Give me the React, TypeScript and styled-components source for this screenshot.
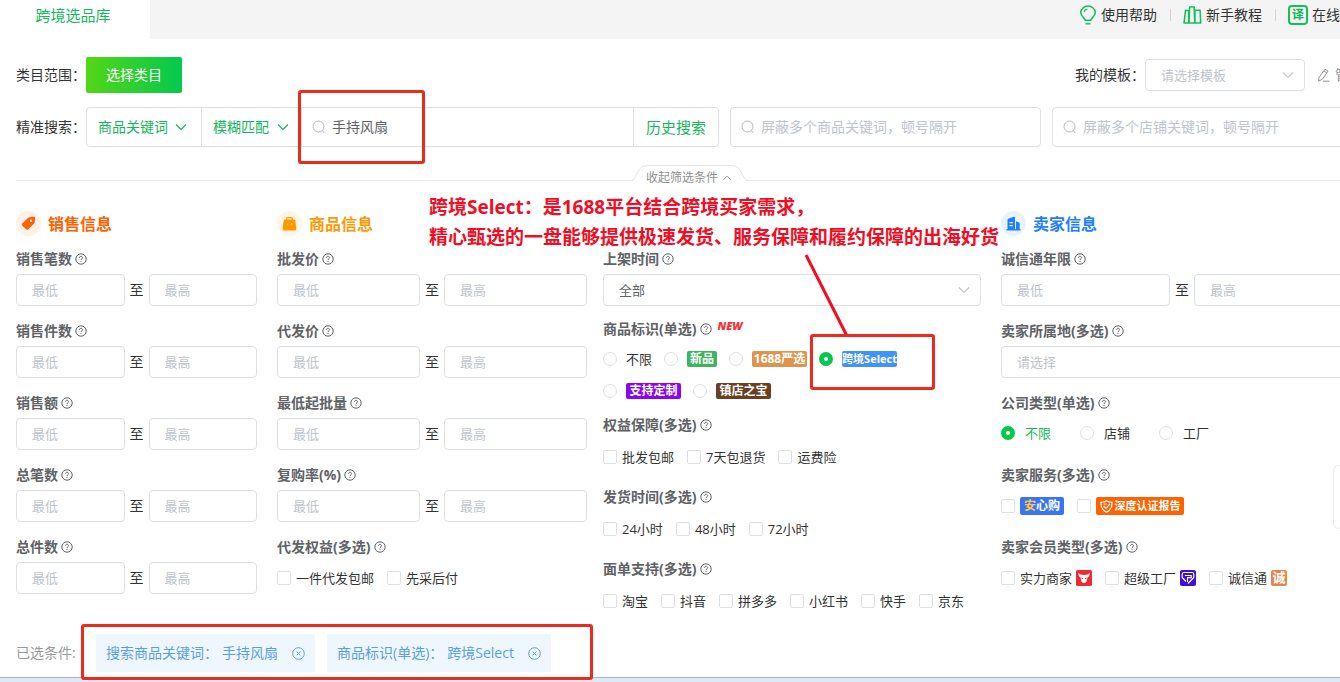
import React, { useId } from "react";
import styled, { createGlobalStyle } from "styled-components";

const GlobalStyle = createGlobalStyle`
  * { box-sizing: border-box; }
  body {
    margin: 0;
    overflow-x: hidden;
    background: #fff;
    color: #333;
    font: 14px/20px "Open Sans", "Noto Sans CJK SC", sans-serif;
  }
  button, input, select { font: inherit; color: inherit; margin: 0; }
  input::placeholder { color: #c0c4cc; opacity: 1; }
`;

const green = "#12b85a";
const line = "#dcdfe6";
const faint = "#c0c4cc";

const Viewport = styled.div`
  overflow: hidden;
`;

const Page = styled.div`
  width: calc(100% + 39px);
`;

const TopBar = styled.header`
  display: flex;
  justify-content: space-between;
  height: 39px;
  padding-right: 11px;
  background: #f4f4f4;
`;

const Tab = styled.a`
  width: 150px;
  padding: 5px 4px 0 0;
  background: #fff;
  color: ${green};
  font-size: 15px;
  text-align: center;
  text-decoration: none;
`;

const HelpNav = styled.nav`
  display: flex;
  align-items: center;
  height: 30px;
`;

const HelpLink = styled.a`
  display: flex;
  align-items: center;
  gap: 4px;
  color: #333;
  text-decoration: none;
  & + & {
    margin-left: 13px;
  }
  & + &::before {
    content: "";
    width: 1px;
    height: 12px;
    margin-right: 8px;
    background: #d4d4d4;
  }
`;

const TranslateMark = styled.span`
  width: 20px;
  height: 20px;
  border: 2px solid #14c05c;
  border-radius: 4px;
  color: #14b457;
  font-size: 12px;
  font-weight: 700;
  line-height: 16px;
  text-align: center;
`;

const Main = styled.main`
  padding: 18px 16px 0;
`;

const Bar = styled.div`
  display: flex;
  align-items: center;
  justify-content: space-between;
  height: 36px;
  margin-bottom: 14px;
`;

const Inline = styled.div`
  display: flex;
  align-items: center;
`;

const BarLabel = styled.label`
  flex: none;
  width: 70px;
`;

const CategoryButton = styled.button`
  width: 96px;
  height: 36px;
  padding: 0;
  border: 0;
  border-radius: 2px;
  background: linear-gradient(90deg, #52d716, #04c94e);
  color: #fff;
`;

const SelectBox = styled.span<{ $width?: string; $arrow?: number }>`
  position: relative;
  display: flex;
  width: ${(p) => p.$width ?? "100%"};
  svg {
    position: absolute;
    right: ${(p) => p.$arrow ?? 11}px;
    top: calc(50% - 4px);
    pointer-events: none;
  }
`;

const Select = styled.select<{ $muted?: boolean }>`
  appearance: none;
  width: 100%;
  height: 32px;
  padding: 0 15px;
  border: 1px solid ${line};
  border-radius: 4px;
  background: #fff;
  color: ${(p) => (p.$muted ? faint : "#606266")};
  font-size: 13px;
`;

const ManageButton = styled.button`
  display: flex;
  align-items: center;
  gap: 5px;
  padding: 0;
  margin-left: 12px;
  border: 0;
  background: none;
  color: #909399;
`;

const SearchRow = styled.div`
  display: flex;
  align-items: center;
`;

const SearchGrid = styled.div`
  flex: 1;
  display: grid;
  grid-template-columns: 633fr 311fr 311fr;
  gap: 11px;
`;

const SearchBox = styled.div`
  position: relative;
  display: flex;
  align-items: center;
  height: 40px;
  border: 1px solid ${line};
  border-radius: 4px;
`;

const SearchSelect = styled.select`
  appearance: none;
  width: 100%;
  height: 38px;
  padding: 0 11px;
  border: 0;
  border-right: 1px solid ${line};
  background: transparent;
  color: ${green};
`;

const KeywordField = styled.label`
  flex: 1;
  position: relative;
  display: flex;
  align-items: center;
  gap: 6px;
  min-width: 0;
  height: 38px;
  padding-left: 10px;
  svg {
    flex: none;
  }
`;

const KeywordInput = styled.input`
  flex: 1;
  min-width: 0;
  padding: 0;
  border: 0;
  outline: 0;
  background: transparent;
  color: #606266;
`;

const HistoryButton = styled.button`
  flex: none;
  width: 85px;
  height: 38px;
  padding: 0;
  border: 0;
  border-left: 1px solid ${line};
  background: transparent;
  color: ${green};
  font-size: 15px;
`;

const Divider = styled.div`
  display: flex;
  height: 26px;
  margin: 18px 0 20px;
  &::before,
  &::after {
    content: "";
    flex: 1;
    height: 1px;
    margin-top: 15px;
    background: #ebebeb;
  }
`;

const FoldButton = styled.button`
  position: relative;
  display: flex;
  align-items: center;
  gap: 4px;
  width: 117px;
  height: 26px;
  padding: 0 15px;
  border: 0;
  background: none;
  color: #909090;
  font-size: 12px;
`;

const FoldOutline = styled.svg`
  position: absolute;
  left: 0;
  top: 0;
`;

const Columns = styled.div`
  display: grid;
  grid-template-columns: 241fr 306fr 378fr 362fr;
  column-gap: 20px;
`;

const Column = styled.section<{ $wide?: boolean }>`
  position: relative;
  min-width: 0;
  margin-right: ${(p) => (p.$wide ? "-4px" : "0")};
`;

const ColumnTitle = styled.h2<{ $color?: string }>`
  display: flex;
  align-items: center;
  gap: 7px;
  height: 25px;
  margin: 0 0 8px;
  color: ${(p) => p.$color};
  font-size: 16px;
  font-weight: 700;
`;

const Disc = styled.span<{ $tint: string }>`
  display: grid;
  place-items: center;
  width: 25px;
  height: 25px;
  border-radius: 50%;
  background: ${(p) => p.$tint};
`;

const Group = styled.div<{ $after?: number }>`
  margin-bottom: ${(p) => p.$after ?? 10}px;
`;

const GroupLabel = styled.div`
  display: flex;
  align-items: center;
  gap: 3px;
  height: 30px;
  color: #606266;
  font-weight: 700;
`;

const NewMark = styled.em`
  margin: 0 0 6px 3px;
  color: #f5323c;
  font-size: 11px;
  font-weight: 800;
  line-height: 12px;
`;

const RangeRow = styled.div`
  display: flex;
  align-items: center;
  gap: 5px;
`;

const TextInput = styled.input`
  flex: 1;
  width: 100%;
  min-width: 0;
  height: 32px;
  padding: 0 15px;
  border: 1px solid ${line};
  border-radius: 4px;
  font-size: 13px;
`;

const Options = styled.div<{ $row: number; $gap: number }>`
  display: flex;
  flex-wrap: wrap;
  gap: 2px ${(p) => p.$gap}px;
  label {
    height: ${(p) => p.$row}px;
  }
`;

const OptionLabel = styled.label<{ $space: number }>`
  position: relative;
  display: flex;
  align-items: center;
  gap: ${(p) => p.$space}px;
  font-size: 13px;
  white-space: nowrap;
`;

const CheckInput = styled.input`
  appearance: none;
  flex: none;
  width: 14px;
  height: 14px;
  border: 1px solid ${line};
  border-radius: 2px;
  &:checked {
    background: #06c755;
  }
`;

const RadioInput = styled.input`
  appearance: none;
  flex: none;
  width: 14px;
  height: 14px;
  border: 1px solid ${line};
  border-radius: 50%;
  background: #fff;
  &:checked {
    border: 5px solid #06c74f;
  }
  &:checked + span {
    color: ${green};
  }
`;

const Badge = styled.b<{ $bg: string; $width: number; $tall?: boolean; $small?: boolean }>`
  display: flex;
  align-items: center;
  justify-content: center;
  gap: 2px;
  width: ${(p) => p.$width}px;
  height: ${(p) => (p.$tall ? 18 : 16)}px;
  border-radius: 2px;
  background: ${(p) => p.$bg};
  color: #fff;
  font-size: ${(p) => (p.$small ? 11 : 12)}px;
  line-height: 16px;
`;

const Gold = styled.span`
  color: #ffc53d;
`;

const Member = styled.span`
  display: flex;
  align-items: center;
  gap: 4px;
`;

const HonestMark = styled.b`
  width: 16px;
  height: 16px;
  border-radius: 2px;
  background: #e8834a;
  color: #fff;
  font-size: 13px;
  line-height: 15px;
  text-align: center;
`;

const Chosen = styled.div`
  position: relative;
  display: flex;
  align-items: center;
  gap: 12px;
  padding: 8px 0 5px;
  color: #999;
`;

const ChosenLabel = styled.span`
  width: 68px;
`;

const Chip = styled.span`
  display: flex;
  align-items: center;
  gap: 4px;
  height: 38px;
  padding: 0 10px;
  background: #eef6fe;
  color: #5b9fe3;
`;

const ChipClose = styled.button`
  display: flex;
  padding: 0;
  margin-left: 10px;
  border: 0;
  background: none;
  color: inherit;
`;

const BottomStrip = styled.div`
  height: 5px;
  border-top: 1px solid #a9b4c2;
  background: #dfe9f6;
`;

const SideHandle = styled.aside`
  position: fixed;
  right: 0;
  top: 465px;
  width: 7px;
  height: 64px;
  border: 1px solid #eee;
  border-right: 0;
  border-radius: 6px 0 0 6px;
  background: #fff;
`;

const Highlight = styled.i<{ $x: number; $y: number; $w: number; $h: number }>`
  position: absolute;
  z-index: 2;
  left: ${(p) => p.$x}px;
  top: ${(p) => p.$y}px;
  width: ${(p) => p.$w}px;
  height: ${(p) => p.$h}px;
  border: 3px solid #ee2a1c;
  border-radius: 3px;
  pointer-events: none;
`;

const Note = styled.p`
  position: absolute;
  z-index: 2;
  left: -174px;
  top: -19px;
  margin: 0;
  color: #f20d24;
  font-size: 19px;
  font-weight: 700;
  line-height: 30px;
  white-space: nowrap;
  pointer-events: none;
`;

const Pointer = styled.svg`
  position: absolute;
  z-index: 2;
  left: 200px;
  top: 42px;
  pointer-events: none;
`;

const Chevron = ({ color = faint, up = false, size = 12 }) => (
  <svg width={size} height={size - 4} viewBox="0 0 12 8" fill="none" stroke={color} strokeWidth="1.200">
    <path d={up ? "M1 6.5 6 1.5l5 5" : "M1 1.5 6 6.5l5-5"} />
  </svg>
);

const SearchIcon = () => (
  <svg width="14" height="14" viewBox="0 0 14 14" fill="none" stroke="#b4b8c0">
    <circle cx="6.5" cy="6.5" r="5.5" />
    <path d="m10.3 10.5 2 2.5" />
  </svg>
);

const HelpIcon = () => (
  <svg width="12" height="12" viewBox="0 0 12 12" fill="none" stroke="#606266">
    <circle cx="6" cy="6" r="5.2" />
    <path d="M4.4 4.9c0-1 .7-1.6 1.6-1.6s1.6.6 1.6 1.4C7.6 5.800 6 5.700 6 7.100M6 8.100v1" />
  </svg>
);

const BulbIcon = () => (
  <svg width="18" height="20" viewBox="0 0 18 20" fill="none" stroke="#14c05c" strokeWidth="1.600">
    <path d="M6.300 15.300c0-2-4.600-3.600-4.600-8A7.200 7.200 0 0 1 9 1a7.200 7.200 0 0 1 7.300 6.300c0 4.400-4.600 6-4.600 8zM6.500 18.700h5" />
    <path d="M5 7.200A4 4 0 0 1 8.300 4.200" strokeWidth="1.200" />
  </svg>
);

const BooksIcon = () => (
  <svg width="19" height="18" viewBox="0 0 19 18" fill="none" stroke="#14c05c" strokeWidth="1.600" strokeLinejoin="round">
    <path d="M2.600 4.200 5.800 4.700V17H1zM6.600 1h4.600l.6 16H6zM11.900 4.200h5.200L17.700 17h-5.800z" />
  </svg>
);

const PencilIcon = () => (
  <svg width="13" height="14" viewBox="0 0 13 14" fill="none" stroke="#909399">
    <path d="M8 1.200 11 3.200 5.200 11.400 1.600 13l.4-3.600zM7 3l2.800 2M6 13.200h6.500" />
  </svg>
);

const PriceTagIcon = () => (
  <svg width="15" height="15" viewBox="0 0 15 15" fill="#ff6200">
    <path fillRule="evenodd" d="M8.300 1.300 13 .8q1.200 0 1.100 1.200l-.5 4.700q-.1.500-.5.900l-6 5.900q-.8.700-1.600 0L1 9.300q-.7-.8 0-1.600l6.300-6q.4-.4 1-.4zM10 3.600a1.200 1.200 0 1 0 0 2.400 1.200 1.200 0 0 0 0-2.400z" />
  </svg>
);

const BagIcon = () => (
  <svg width="15" height="15" viewBox="0 0 15 15" fill="#ff9900">
    <path d="M4.600 5V3.300q0-1.700 1.700-1.700h2.400q1.700 0 1.700 1.700V5" fill="none" stroke="#ff9900" strokeWidth="1.300" />
    <path d="M2.600 3.600h9.800q.8 0 1 .8l.9 8.600q.1 1.400-1.200 1.400H1.900Q.6 14.400.7 13l.9-8.600q.2-.8 1-.8z" />
    <path d="M4.900 8h1.200M8.900 8h1.200" stroke="#ffe2b0" strokeWidth="1.200" />
  </svg>
);

const BuildingIcon = () => (
  <svg width="15" height="15" viewBox="0 0 15 15" fill="#1f80ff">
    <path fillRule="evenodd" d="M1.500 13V4q0-.8.700-1.200L7.800.7q1.200-.3 1.200.9V13h1V5.300l3 1.200q.7.300.7 1V13h.8v1.400H.5V13zM3.500 6v1.200h3.300V6zm0 3v1.200h3.300V9z" />
  </svg>
);

const ShieldIcon = () => (
  <svg width="13" height="13" viewBox="0 0 13 13" fill="none" stroke="#fff" strokeWidth="1.100">
    <path d="M1 2.200Q4 2.400 6.500.8 9 2.400 12 2.200q.6 7-5.500 10Q.4 9.200 1 2.200z" />
    <path d="m3.600 5.800 2.300 2.600L10 3.800M3.800 4h3" />
  </svg>
);

const BullIcon = () => (
  <svg width="16" height="16" viewBox="0 0 16 16">
    <rect width="16" height="16" rx="1.500" fill="#ee2b35" />
    <path d="M2.500 2.500Q3 5 8 5t5.500-2.500Q14 6.500 11.500 7.500L10.300 12q-2.300 2-4.600 0L4.500 7.500Q2 6.500 2.500 2.500z" fill="#fff" />
    <path d="m5.500 8 1.500.8M10.500 8 9 8.800" stroke="#ee2b35" />
  </svg>
);

const FactoryIcon = () => (
  <svg width="16" height="16" viewBox="0 0 16 16" fill="none" stroke="#fff" strokeWidth="1.200">
    <rect width="16" height="16" rx="2" fill="#3d0fd8" stroke="none" />
    <path d="M6 11.500 2.200 7.500V4.300Q2.200 2.500 4 2.500h8q1.800 0 1.800 1.800v3.200L8 13.500" />
    <path d="M4.800 5.500h6.400v2.200H7.500V12" />
  </svg>
);

const CloseIcon = () => (
  <svg width="13" height="13" viewBox="0 0 13 13" fill="none" stroke="currentColor">
    <circle cx="6.500" cy="6.500" r="5.800" />
    <path d="m4.600 4.600 3.800 3.800M8.400 4.600 4.600 8.400" />
  </svg>
);

type GroupProps = { label: string; after?: number; isNew?: boolean; children: React.ReactNode };

const Field = ({ label, after, isNew, children }: GroupProps) => {
  const id = useId();
  return (
    <Group $after={after} role="group" aria-labelledby={id}>
      <GroupLabel>
        <span id={id}>{label}</span>
        <HelpIcon />
        {isNew && <NewMark>NEW</NewMark>}
      </GroupLabel>
      {children}
    </Group>
  );
};

const Range = ({ label }: { label: string }) => (
  <Field label={label}>
    <RangeRow>
      <TextInput placeholder="最低" aria-label={`${label}最低`} />
      <span>至</span>
      <TextInput placeholder="最高" aria-label={`${label}最高`} />
    </RangeRow>
  </Field>
);

type ChecksProps = { label: string; items: React.ReactNode[]; tall?: boolean };

const Checks = ({ label, items, tall }: ChecksProps) => (
  <Field label={label} after={tall ? 8 : 10}>
    <Options $row={tall ? 34 : 32} $gap={13}>
      {items.map((item, i) => (
        <OptionLabel key={i} $space={5}>
          <CheckInput type="checkbox" />
          {item}
        </OptionLabel>
      ))}
    </Options>
  </Field>
);

type RadioProps = { name: string; on?: boolean; space: number; children: React.ReactNode };

const Radio = ({ name, on, space, children }: RadioProps) => (
  <OptionLabel $space={space}>
    <RadioInput type="radio" name={name} defaultChecked={on} />
    {children}
  </OptionLabel>
);

export default function App() {
  return (
    <Viewport>
      <GlobalStyle />
      <Page>
        <TopBar>
          <Tab href="#library">跨境选品库</Tab>
          <HelpNav>
            <HelpLink href="#help"><BulbIcon />使用帮助</HelpLink>
            <HelpLink href="#guide"><BooksIcon />新手教程</HelpLink>
            <HelpLink href="#translate"><TranslateMark>译</TranslateMark>在线翻译</HelpLink>
          </HelpNav>
        </TopBar>
        <Main>
          <Bar>
            <Inline>
              <BarLabel htmlFor="category">类目范围：</BarLabel>
              <CategoryButton id="category" type="button">选择类目</CategoryButton>
            </Inline>
            <Inline>
              <BarLabel htmlFor="template">我的模板：</BarLabel>
              <SelectBox $width="160px">
                <Select id="template" $muted><option>请选择模板</option></Select>
                <Chevron />
              </SelectBox>
              <ManageButton type="button"><PencilIcon />管理</ManageButton>
            </Inline>
          </Bar>

          <SearchRow>
            <BarLabel htmlFor="keyword">精准搜索：</BarLabel>
            <SearchGrid>
              <SearchBox>
                <SelectBox $width="115px" $arrow={15}>
                  <SearchSelect aria-label="搜索类型"><option>商品关键词</option></SearchSelect>
                  <Chevron color={green} />
                </SelectBox>
                <SelectBox $width="100px" $arrow={13}>
                  <SearchSelect aria-label="匹配方式"><option>模糊匹配</option></SearchSelect>
                  <Chevron color={green} />
                </SelectBox>
                <KeywordField>
                  <SearchIcon />
                  <KeywordInput id="keyword" defaultValue="手持风扇" />
                  <Highlight $x={-4} $y={-18} $w={127} $h={74} />
                </KeywordField>
                <HistoryButton type="button">历史搜索</HistoryButton>
              </SearchBox>
              <SearchBox>
                <KeywordField><SearchIcon /><KeywordInput aria-label="屏蔽商品关键词" placeholder="屏蔽多个商品关键词，顿号隔开" /></KeywordField>
              </SearchBox>
              <SearchBox>
                <KeywordField><SearchIcon /><KeywordInput aria-label="屏蔽店铺关键词" placeholder="屏蔽多个店铺关键词，顿号隔开" /></KeywordField>
              </SearchBox>
            </SearchGrid>
          </SearchRow>

          <Divider>
            <FoldButton type="button">
              <FoldOutline width="117" height="17" viewBox="0 0 117 17" fill="none" stroke="#e4e4e4">
                <path d="M0 15.500C7 15.500 4 .5 17 .5h83c13 0 10 15 17 15" />
              </FoldOutline>
              收起筛选条件
              <Chevron color="#909090" up size={10} />
            </FoldButton>
          </Divider>

          <Columns>
            <Column>
              <ColumnTitle $color="#ff6200"><Disc $tint="#fff0e8"><PriceTagIcon /></Disc>销售信息</ColumnTitle>
              <Range label="销售笔数" />
              <Range label="销售件数" />
              <Range label="销售额" />
              <Range label="总笔数" />
              <Range label="总件数" />
            </Column>

            <Column $wide>
              <ColumnTitle $color="#ff9900"><Disc $tint="#fff5e6"><BagIcon /></Disc>商品信息</ColumnTitle>
              <Range label="批发价" />
              <Range label="代发价" />
              <Range label="最低起批量" />
              <Range label="复购率(%)" />
              <Checks label="代发权益(多选)" items={["一件代发包邮", "先采后付"]} />
            </Column>

            <Column>
              <Note>跨境Select：是1688平台结合跨境买家需求，<br />精心甄选的一盘能够提供极速发货、服务保障和履约保障的出海好货</Note>
              <Pointer width="50" height="86" viewBox="0 0 50 86" stroke="#f20d24" strokeWidth="3">
                <path d="M3 2 44 83" />
              </Pointer>
              <ColumnTitle />
              <Field label="上架时间" after={8}>
                <SelectBox>
                  <Select aria-label="上架时间"><option>全部</option></Select>
                  <Chevron />
                </SelectBox>
              </Field>
              <Field label="商品标识(单选)" after={4} isNew>
                <Options $row={30} $gap={12}>
                  <Radio name="mark" space={9}>不限</Radio>
                  <Radio name="mark" space={9}><Badge $bg="#3db560" $width={30}>新品</Badge></Radio>
                  <Radio name="mark" space={9}><Badge $bg="#e0934a" $width={55}>1688严选</Badge></Radio>
                  <Radio name="mark" space={9} on>
                    <Badge $bg="#3f93fb" $width={55} $small>跨境Select</Badge>
                    <Highlight $x={-9} $y={-10} $w={125} $h={56} />
                  </Radio>
                  <Radio name="mark" space={9}><Badge $bg="#8b05f5" $width={55}>支持定制</Badge></Radio>
                  <Radio name="mark" space={9}><Badge $bg="#6a4020" $width={55}>镇店之宝</Badge></Radio>
                </Options>
              </Field>
              <Checks tall label="权益保障(多选)" items={["批发包邮", "7天包退货", "运费险"]} />
              <Checks tall label="发货时间(多选)" items={["24小时", "48小时", "72小时"]} />
              <Checks tall label="面单支持(多选)" items={["淘宝", "抖音", "拼多多", "小红书", "快手", "京东"]} />
            </Column>

            <Column>
              <ColumnTitle $color="#1f80ff"><Disc $tint="#e9f3ff"><BuildingIcon /></Disc>卖家信息</ColumnTitle>
              <Range label="诚信通年限" />
              <Field label="卖家所属地(多选)">
                <RangeRow><TextInput placeholder="请选择" aria-label="卖家所属地" /></RangeRow>
              </Field>
              <Field label="公司类型(单选)" after={12}>
                <Options $row={30} $gap={29}>
                  <Radio name="company" space={10} on><span>不限</span></Radio>
                  <Radio name="company" space={10}><span>店铺</span></Radio>
                  <Radio name="company" space={10}><span>工厂</span></Radio>
                </Options>
              </Field>
              <Checks
                label="卖家服务(多选)"
                items={[
                  <Badge $bg="#3a74f6" $width={44} $tall><span><Gold>安</Gold>心购</span></Badge>,
                  <Badge $bg="#ff6200" $width={88} $tall $small><ShieldIcon />深度认证报告</Badge>,
                ]}
              />
              <Checks
                label="卖家会员类型(多选)"
                items={[
                  <Member>实力商家<BullIcon /></Member>,
                  <Member>超级工厂<FactoryIcon /></Member>,
                  <Member>诚信通<HonestMark>诚</HonestMark></Member>,
                ]}
              />
            </Column>
          </Columns>

          <Chosen>
            <ChosenLabel>已选条件:</ChosenLabel>
            <Chip>
              <span>搜索商品关键词：</span><span>手持风扇</span>
              <ChipClose type="button" aria-label="移除手持风扇"><CloseIcon /></ChipClose>
            </Chip>
            <Chip>
              <span>商品标识(单选)：</span><span>跨境Select</span>
              <ChipClose type="button" aria-label="移除跨境Select"><CloseIcon /></ChipClose>
            </Chip>
            <Highlight $x={65} $y={-2} $w={512} $h={56} />
          </Chosen>
        </Main>
        <BottomStrip />
      </Page>
      <SideHandle aria-label="侧边工具" />
    </Viewport>
  );
}
